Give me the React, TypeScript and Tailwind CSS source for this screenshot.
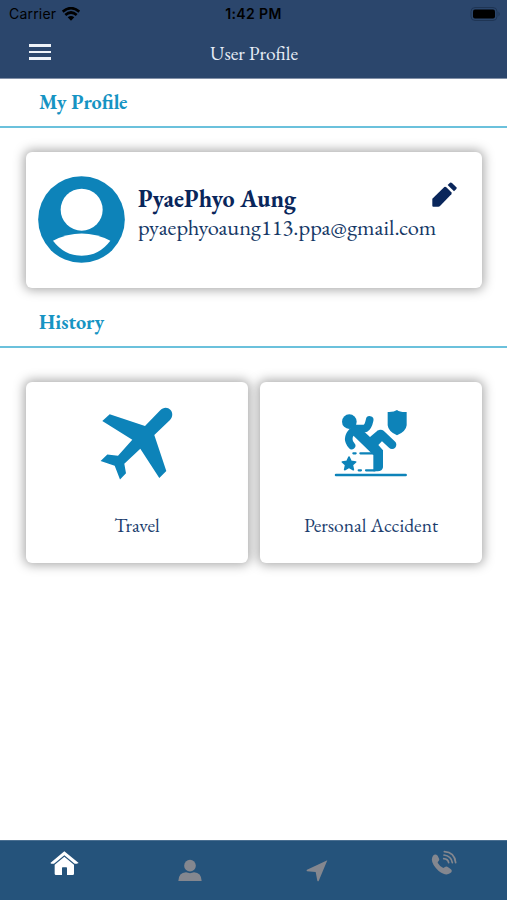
import React from "react";

const historyItems = [
  { title: "Travel", icon: <PlaneIcon />, style: "pb-[3px]" },
  { title: "Personal Accident", icon: <AccidentIcon />, style: "pr-[2px]" },
];

const tabs = [
  { name: "Home", icon: <HomeIcon />, style: "pt-[10px] pl-[2px]" },
  { name: "Profile", icon: <PersonIcon />, style: "pt-[18px]" },
  { name: "Location", icon: <ArrowIcon />, style: "pt-[19px]" },
  { name: "Call", icon: <CallIcon />, style: "pt-[9px]" },
];

function WifiIcon() {
  return (
    <svg className="w-[18px] h-[14px]" viewBox="0 0 54 42" fill="none" stroke="black" strokeWidth="8">
      <path d="M2 14 Q27 -7 52 14" />
      <path d="M10 24 Q27 9 44 24" />
      <path d="M27 41 L17 31 Q27 23 37 31 Z" fill="black" stroke="none" />
    </svg>
  );
}

function BatteryIcon() {
  return (
    <svg className="w-[31px] h-[14px]" viewBox="0 0 31 14">
      <rect x="1" y="0.5" width="26" height="13" rx="4" fill="none" stroke="#1f3554" />
      <rect x="3" y="2.5" width="22" height="9" rx="2" fill="black" />
      <path d="M28.5 4.5 Q31 7 28.5 9.5 Z" fill="#1f3554" />
    </svg>
  );
}

function AvatarIcon() {
  return (
    <svg className="w-[87px] h-[87px]" viewBox="0 0 261 261">
      <circle cx="130.500" cy="130.500" r="130" fill="#0d83b9" />
      <circle cx="131" cy="101" r="63" fill="white" />
      <path d="M45 194 Q131 151 217 194 Q183 239 131 239 Q79 239 45 194 Z" fill="white" />
    </svg>
  );
}

function PencilIcon() {
  return (
    <svg className="w-[25px] h-[25px]" viewBox="0 0 75 75" fill="#09265b">
      <path d="M1 50 L37 15 Q40 13 43 16 L58 31 Q60 34 58 37 L24 72 Q22 74 19 74 H4 Q1 74 1 71 Z" />
      <path d="M47 9 L54 2 Q57 0 60 3 L73 16 Q75 19 73 21 L66 28 Z" />
    </svg>
  );
}

function PlaneIcon() {
  return (
    <svg className="w-[76px] h-[76px]" viewBox="100 405 76 76" fill="#0d83b9">
      <path d="M103.300 420 L110.700 413.300 L146 425 L161 409.500 C164.500 405.800 169 406.300 171.300 408.800 C174 411.500 174 416 171 419 L155.300 434 L167.300 470 L160.300 477 L141.300 447.700 L125.300 462.700 L127 472.300 L121 478.500 L115.700 464.700 L101.600 460 L108.300 453.500 L119 454.700 L133.300 438.700 Z" />
    </svg>
  );
}

function AccidentIcon() {
  return (
    <svg className="w-[90px] h-[85px]" viewBox="0 0 270 255" fill="#0d83b9">
      <circle cx="73" cy="65" r="22" />
      <g fill="none" stroke="#0d83b9" strokeLinecap="round" strokeLinejoin="round">
        <path d="M90 86 L121 85 Q130 80 134 60" strokeWidth="23" />
        <path d="M81 95 Q62 116 80 137" strokeWidth="22" />
        <path d="M167 102 L201 134" strokeWidth="26" />
        <path d="M85 160 H92 M106 160 H145 M101 211 H108 M123 211 H150" strokeWidth="6.500" />
        <path d="M33 225 H242" strokeWidth="7.500" />
      </g>
      <path d="M76 75 L108 86 L135 111 L159 91 L177 117 L160 135 L174 151 V202 Q172 214 158 214 H145 V165 L84 106 Z" />
      <path d="M216 30 Q225 37 245 36 V76 Q243 95 216 106 Q190 95 188 76 V36 Q207 37 216 30 Z" />
      <path
        d="M72 171 L78 184 L92 186 L82 195 L85 209 L72 202 L59 209 L62 195 L52 186 L66 184 Z"
        stroke="#0d83b9"
        strokeWidth="5"
        strokeLinejoin="round"
      />
    </svg>
  );
}

function HomeIcon() {
  return (
    <svg className="w-[29px] h-[25px]" viewBox="0 0 87 75" fill="white">
      <path d="M1 36 L43 1 L86 36 L80 38 H74 L43 13 L12 38 H4 Z" />
      <path d="M14 41 L43 17 L72 41 V68 Q72 72 68 72 H51 V51 Q51 49 49 49 H38 Q36 49 36 51 V72 H18 Q14 72 14 68 Z" />
    </svg>
  );
}

function PersonIcon() {
  return (
    <svg className="w-[24px] h-[23px]" viewBox="0 0 72 69" fill="#84878f">
      <circle cx="36" cy="20" r="17.500" />
      <path d="M1 66 Q2 41 24 40 Q36 45 48 40 Q70 41 71 66 Z" />
    </svg>
  );
}

function ArrowIcon() {
  return (
    <svg className="w-[22px] h-[22px]" viewBox="0 0 66 66" fill="#84878f">
      <path d="M64 1 L38 63 Q36 65 34 62 L29 36 L3 34 Q0 31 3 29 Z" />
    </svg>
  );
}

function CallIcon() {
  return (
    <svg className="w-[26px] h-[26px]" viewBox="0 0 78 78" fill="none">
      <path
        d="M6 17 Q13 10 20 17 L25 28 Q25 32 21 35 L20 38 Q26 49 37 54 L42 51 Q45 48 49 50 L60 58 Q66 65 57 70 Q44 79 23 63 Q-6 36 6 17 Z"
        fill="#84878f"
      />
      <g stroke="#84878f" strokeWidth="5" strokeLinecap="round">
        <path d="M40 5 Q71 7 74 38" />
        <path d="M39 15 Q61 18 64 38" />
        <path d="M38 26 Q51 27 53 38" />
      </g>
    </svg>
  );
}

const SectionTitle = ({ title }: { title: string }) => {
  return (
    <div className="h-[49px] border-b-2 border-[#6bc1dc] pl-[39px] pt-[8px]">
      <h2 className="text-[20.200px] leading-[30px] font-bold text-[#1694c3]">{title}</h2>
    </div>
  );
};

const App = () => {
  return (
    <div className="flex flex-col h-[900px] w-[507px] overflow-hidden bg-white font-['EB_Garamond','Liberation_Serif',serif]">
      <header className="h-[79px] shrink-0 bg-[#2b466c] border-b border-[#8290a7]">
        <div className="grid grid-cols-3 items-center h-[27px] font-['Inter',sans-serif] text-black">
          <div className="flex items-center gap-[6px] pl-[9px]">
            <span className="text-[14px] tracking-[0.2px]">Carrier</span>
            <WifiIcon />
          </div>
          <span className="text-center text-[14px] tracking-[0.4px] font-semibold">1:42 PM</span>
          <div className="flex justify-end pr-[6px]">
            <BatteryIcon />
          </div>
        </div>
        <div className="grid grid-cols-3 items-center h-[51px]">
          <button aria-label="Menu" className="ml-[29px] -mt-[1px] w-[22px] flex flex-col gap-[4px]">
            <span className="h-[2.500px] w-full bg-[#eef2f8]"></span>
            <span className="h-[2.500px] w-full bg-[#eef2f8]"></span>
            <span className="h-[2.500px] w-full bg-[#eef2f8]"></span>
          </button>
          <h1 className="pt-[3px] pl-[1px] text-center text-[19.500px] text-[#e7edf6]">User Profile</h1>
        </div>
      </header>

      <main className="flex-1">
        <SectionTitle title="My Profile" />
        <div className="mt-[24px] ml-[26px] w-[456px] h-[136px] rounded-[6px] flex bg-white shadow-[0_0_11px_2px_rgba(0,0,0,0.34)]">
          <div className="pl-[12px] pt-[24px] shrink-0">
            <AvatarIcon />
          </div>
          <div className="w-[307px] shrink-0 pl-[13px] pt-[33px] text-[#153866]">
            <h3 className="text-[24px] leading-[28px] font-bold text-[#09265b]">PyaePhyo Aung</h3>
            <p className="text-[22.500px] leading-[28px] whitespace-nowrap">
              pyaephyoaung113.ppa@gmail.com
            </p>
          </div>
          <button aria-label="Edit" className="mt-[30px] h-[25px] shrink-0">
            <PencilIcon />
          </button>
        </div>

        <div className="mt-[11px]">
          <SectionTitle title="History" />
        </div>
        <div className="mt-[34px] ml-[26px] flex gap-[12px]">
          {historyItems.map((item) => (
            <div
              key={item.title}
              className="w-[222px] h-[181px] rounded-[6px] flex flex-col items-center bg-white shadow-[0_0_11px_2px_rgba(0,0,0,0.34)]"
            >
              <div className={`h-[103px] flex items-end ${item.style}`}>
                {item.icon}
              </div>
              <p className="mt-[25px] text-[19.500px] leading-[30px] text-[#1c3e6e]">{item.title}</p>
            </div>
          ))}
        </div>
      </main>

      <footer className="h-[60px] shrink-0 bg-[#25537b] border-t border-[#4a6f91] grid grid-cols-4">
        {tabs.map((tab) => (
          <button key={tab.name} aria-label={tab.name} className={`flex items-start justify-center ${tab.style}`}>
            {tab.icon}
          </button>
        ))}
      </footer>
    </div>
  );
};

export default App;
